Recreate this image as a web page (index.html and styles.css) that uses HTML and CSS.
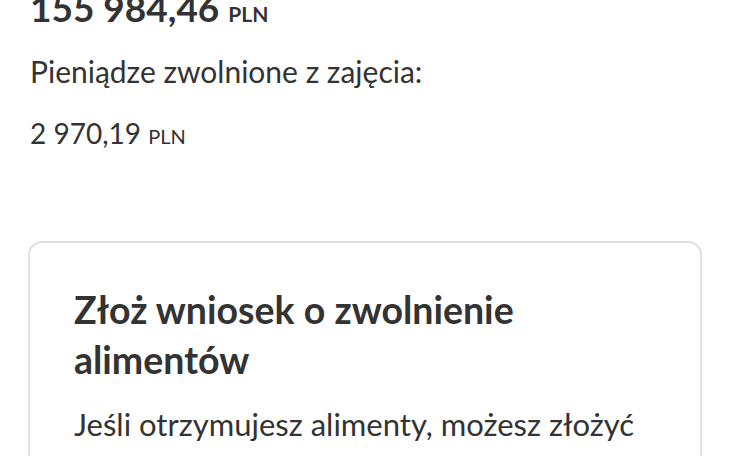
FILE: index.html
```html
<!DOCTYPE html>
<html lang="pl">
<head>
    <meta charset="UTF-8">
    <meta name="viewport" content="width=device-width, initial-scale=1.0">
    <title>Zajęcie</title>
    <link rel="stylesheet" href="styles.css">
</head>
<body>
    <div class="summary">
        <div class="total">155 984,46 <span class="currency">PLN</span></div>
        <p class="label">Pieniądze zwolnione z zajęcia:</p>
        <div class="amount">2 970,19 <span class="currency">PLN</span></div>
    </div>

    <div class="card">
        <h2>Złoż wniosek o zwolnienie alimentów</h2>
        <p>Jeśli otrzymujesz alimenty, możesz złożyć wniosek o zwolnienie ich z zajęcia.</p>
    </div>
</body>
</html>
```

FILE: styles.css
```css
body {
    font-family: Lato, "Open Sans", sans-serif;
    background-color: #fff;
    color: #333;
    margin: 0;
    padding: 0 28px;
}

.summary {
    margin-top: -16px;
    padding-left: 2px;
}

.total {
    font-size: 37px;
    font-weight: 700;
    line-height: 48px;
}

.total .currency {
    font-size: 21px;
}

.label {
    font-size: 30px;
    line-height: 40px;
    margin: 13px 0 0;
}

.amount {
    font-size: 28px;
    line-height: 40px;
    margin-top: 22px;
}

.amount .currency {
    font-size: 20px;
}

.card {
    margin-top: 85px;
    border: 2px solid #e0e0e0;
    border-radius: 14px;
    padding: 42px 44px 20px;
}

.card h2 {
    font-size: 37.5px;
    font-weight: 700;
    line-height: 50px;
    margin: 0;
}

.card p {
    font-size: 31px;
    line-height: 44px;
    margin: 17px 0 0;
}
```
